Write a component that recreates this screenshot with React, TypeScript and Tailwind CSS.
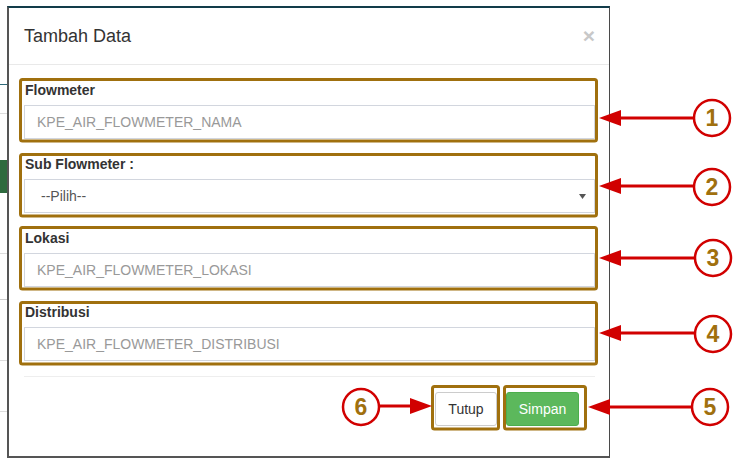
import React from "react";

const font = { fontFamily: '"Liberation Sans", Arial, sans-serif' };

function Field({ label, placeholder }: { label: string; placeholder: string }) {
  return (
    <div className="mb-[15px]">
      <div className="mb-[5px] h-5 pl-px text-[14px] leading-5 font-bold text-[#333]">{label}</div>
      <div className="flex h-[34px] items-center border border-[#d2d6de] bg-white px-3 text-[14px] text-[#999]">
        {placeholder}
      </div>
    </div>
  );
}

function Overlay() {
  const brown = "#a0700e";
  const red = "#d10000";
  const boxes = [
    [20.5, 79.5, 576, 61.5],
    [20.5, 154.5, 576, 61.5],
    [20.5, 227.5, 576, 61.5],
    [20.5, 302.5, 576, 61.5],
    [432.5, 386.5, 66, 42.5],
    [504.5, 386.5, 81, 42.5],
  ];
  const left = [
    { y: 118, tip: 599, cx: 712, cy: 118, n: "1" },
    { y: 186, tip: 599, cx: 712, cy: 187, n: "2" },
    { y: 258, tip: 599, cx: 713, cy: 258, n: "3" },
    { y: 333, tip: 599, cx: 713, cy: 334, n: "4" },
    { y: 407, tip: 588, cx: 710, cy: 407, n: "5" },
  ];
  return (
    <svg className="pointer-events-none absolute inset-0" width="741" height="460" viewBox="0 0 741 460">
      {boxes.map(([x, y, w, h], i) => (
        <rect key={i} x={x} y={y} width={w} height={h} rx="2" fill="none" stroke={brown} strokeWidth="3" />
      ))}
      {left.map((a) => (
        <g key={a.n}>
          <line x1={a.tip + 18} y1={a.y} x2={a.cx - 19} y2={a.y} stroke={red} strokeWidth="3" />
          <polygon points={`${a.tip},${a.y} ${a.tip + 22},${a.y - 8} ${a.tip + 22},${a.y + 8}`} fill={red} />
          <circle cx={a.cx} cy={a.cy} r="18" fill="white" stroke={red} strokeWidth="2.5" />
          <text x={a.cx} y={a.cy + 8} textAnchor="middle" fontSize="23" fontWeight="bold" fill={brown} style={font}>
            {a.n}
          </text>
        </g>
      ))}
      <g>
        <line x1={379} y1={406} x2={414} y2={406} stroke={red} strokeWidth="3" />
        <polygon points="432,406 410,398 410,414" fill={red} />
        <circle cx={361} cy={407} r="18" fill="white" stroke={red} strokeWidth="2.5" />
        <text x={361} y={415} textAnchor="middle" fontSize="23" fontWeight="bold" fill={brown} style={font}>
          6
        </text>
      </g>
    </svg>
  );
}

export default function App() {
  return (
    <div className="relative h-[460px] w-[741px] overflow-hidden bg-white" style={font}>
      <div className="flex">
        {/* page behind the modal */}
        <div className="flex w-[7px] flex-col pt-[84px]">
          <div className="h-px bg-[#2d6a7a]" />
          <div className="mt-[28px] h-px bg-[#ddd]" />
          <div className="mt-[46px] h-[33px] bg-[#2e6b3e]" />
          <div className="mt-[60px] h-px bg-[#ddd]" />
          <div className="mt-[45px] h-px bg-[#ccc]" />
          <div className="mt-[60px] h-px bg-[#ddd]" />
          <div className="mt-[50px] h-px bg-[#ddd]" />
        </div>

        {/* modal */}
        <div className="mt-[6px] flex h-[452px] w-[603px] flex-col border-t-2 border-r border-b-2 border-l-2 border-t-[#123c4a] border-r-[#4a4a4a] border-b-[#555] border-l-[#555] bg-white">
          <div className="flex h-[57px] items-center justify-between border-b border-[#e9e9e9] pr-[14px] pl-[15px]">
            <h4 className="text-[18px] text-[#333]">Tambah Data</h4>
            <span className="mb-[2px] text-[21px] leading-none font-bold text-[#c8c8c8]">×</span>
          </div>

          <div className="pt-[15px] pr-[14px] pl-[15px]">
            <Field label="Flowmeter" placeholder="KPE_AIR_FLOWMETER_NAMA" />
            <div className="mb-[15px]">
              <div className="mb-[5px] h-5 pl-px text-[14px] leading-5 font-bold text-[#333]">Sub Flowmeter :</div>
              <div className="flex h-[34px] items-center justify-between border border-[#d2d6de] bg-white pr-[8px] pl-[16px] text-[14px] text-[#555]">
                <span>--Pilih--</span>
                <svg width="7" height="5" viewBox="0 0 7 5">
                  <path d="M0 0H7L3.5 5Z" fill="#555" />
                </svg>
              </div>
            </div>
            <Field label="Lokasi" placeholder="KPE_AIR_FLOWMETER_LOKASI" />
            <Field label="Distribusi" placeholder="KPE_AIR_FLOWMETER_DISTRIBUSI" />
          </div>

          <div className="mr-[14px] ml-[15px] flex justify-end gap-[9px] border-t border-[#eee] pt-[15px] pr-[16px]">
            <button className="h-[34px] w-[62px] rounded-[3px] border border-[#ccc] bg-white text-[14px] text-[#333]">
              Tutup
            </button>
            <button className="h-[34px] w-[73px] rounded-[3px] border border-[#4cae4c] bg-[#5cb85c] text-[14px] text-white">
              Simpan
            </button>
          </div>
        </div>
      </div>
      <Overlay />
    </div>
  );
}
